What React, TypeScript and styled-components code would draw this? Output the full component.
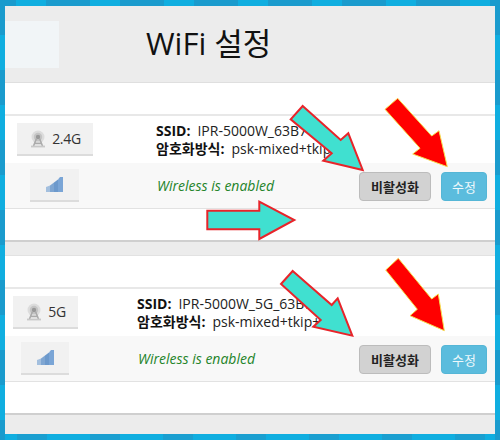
import styled, { createGlobalStyle } from 'styled-components';

const GlobalStyle = createGlobalStyle`
  html, body {
    margin: 0;
    padding: 0;
  }

  body {
    width: 500px;
    height: 440px;
    overflow: hidden;
    font-family: "Open Sans", "Noto Sans CJK KR", sans-serif;
  }
`;

const Page = styled.div`
  position: relative;
  box-sizing: border-box;
  width: 500px;
  height: 440px;
  padding: 6px 5px;
  background-color: #10aee0;
  background-image:
    repeating-linear-gradient(90deg, #1a9bcd -28px 16px, transparent 16px 46px),
    repeating-linear-gradient(180deg, #1a9bcd 0 35px, transparent 35px 70px),
    repeating-linear-gradient(90deg, transparent 47px 90px, #1a9fd0 90px 120px),
    repeating-linear-gradient(180deg, #1a9bcd 0 35px, transparent 35px 70px);
  background-position: 0 0, 0 0, 0 100%, 100% 0;
  background-size: 100% 6px, 5px 100%, 100% 6px, 5px 100%;
  background-repeat: no-repeat;
`;

const Frame = styled.div`
  display: flex;
  flex-direction: column;
  height: 428px;
  background: #fff;
  color: #222;
`;

const Header = styled.header`
  display: flex;
  align-items: center;
  height: 76px;
  flex-shrink: 0;
  background: #ececec;
  border-bottom: 1px solid #dfdfdf;
`;

const Logo = styled.div`
  width: 54px;
  height: 47px;
  background: #f1f5f7;
`;

const Title = styled.h1`
  margin: -2px 0 0 87px;
  font-size: 31px;
  font-weight: 400;
  line-height: 40px;
  color: #111;
`;

const Gap = styled.div`
  height: 31px;
  flex-shrink: 0;
`;

const Table = styled.div`
  border-top: 2px solid #e8e8e8;
  border-bottom: 1px solid #e2e2e2;
`;

const TopRow = styled.div<{ $pad: number; $gap: number }>`
  display: flex;
  align-items: center;
  height: 47px;
  padding-left: ${p => p.$pad}px;
  gap: ${p => p.$gap}px;
`;

const BandRow = styled.div<{ $pad: number; $gap: number }>`
  display: flex;
  align-items: center;
  height: 45px;
  padding: 0 8px 0 ${p => p.$pad}px;
  gap: ${p => p.$gap}px;
  background: #f8f8f8;
`;

const IconButton = styled.div<{ $width: number }>`
  display: flex;
  align-items: center;
  justify-content: center;
  gap: 5px;
  box-sizing: border-box;
  width: ${p => p.$width}px;
  height: 33px;
  background: #f1f1f1;
  border-bottom: 2px solid #dcdcdc;
  font-size: 14px;
  letter-spacing: -0.3px;
  color: #333;
`;

const Info = styled.div`
  font-size: 14px;
  line-height: 18px;
  color: #222;
  white-space: nowrap;
`;

const InfoLabel = styled.b`
  font-weight: 700;
  margin-right: 7px;
  color: #111;
`;

const Status = styled.em`
  flex: 1;
  font-size: 14px;
  font-style: italic;
  color: #24842a;
  white-space: nowrap;
`;

const Actions = styled.div`
  display: flex;
  gap: 10px;
  margin-top: 1px;
`;

const ActionButton = styled.button<{ $primary?: boolean }>`
  box-sizing: border-box;
  width: ${p => (p.$primary ? 46 : 72)}px;
  height: 29px;
  padding: 0;
  border-radius: 4px;
  border: 1px solid ${p => (p.$primary ? '#55b6d6' : '#bcbcbc')};
  background: ${p => (p.$primary ? '#5bbcdd' : '#d2d2d2')};
  color: ${p => (p.$primary ? '#eef8fb' : '#222')};
  font-family: "Noto Sans CJK KR", sans-serif;
  font-size: 13px;
  font-weight: ${p => (p.$primary ? 400 : 700)};
`;

const Divider = styled.div`
  height: 13px;
  flex-shrink: 0;
  background: #ececec;
  border-top: 2px solid #cfcfcf;
  border-bottom: 1px solid #e2e2e2;
`;

const Footer = styled.div`
  flex: 1;
  background: #ececec;
  border-top: 2px solid #cfcfcf;
`;

const ArrowLayer = styled.svg`
  position: absolute;
  top: 0;
  left: 0;
  pointer-events: none;
`;

const AntennaIcon = () => (
  <svg width="18" height="18" viewBox="0 0 18 18" fill="none">
    <circle cx="9" cy="7" r="6.5" fill="#dcdcdc" />
    <circle cx="9" cy="7" r="4.2" fill="#c4c4c4" />
    <circle cx="9" cy="7" r="2.2" fill="#989898" />
    <path d="M7.5 8.5 4.5 16M10.5 8.5l3 7.5M6 13.5h6" stroke="#ababab" strokeWidth="1.6" />
    <path d="M2 16.5h14" stroke="#c8c8c8" strokeWidth="1.8" />
  </svg>
);

const SignalIcon = () => (
  <svg width="17" height="15" viewBox="0 0 17 15">
    <path d="M0 15V10L4 8.5V15Z" fill="#a3bfde" />
    <path d="M4 15V8.5L8 5.5V15Z" fill="#7fa6d2" />
    <path d="M8 15V5.5L12 2.5V15Z" fill="#6c99cc" />
    <path d="M12 15V2.5L14 0H17V15Z" fill="#7aa5d6" />
  </svg>
);

const arrows = [
  { fill: '#40e0d0', stroke: '#e8242a', width: 2, points: '302.7,106 340.7,140 348.3,133.3 362.7,170 323.3,160.7 331.7,153.3 290.7,119.3' },
  { fill: '#ff0000', stroke: '#f5e050', width: 1, points: '397.7,98.3 431.7,136 439,130.7 447.3,166.7 412.7,154 420,148.3 385,109.3' },
  { fill: '#40e0d0', stroke: '#e8242a', width: 2, points: '207.3,210.7 259.3,210.7 259.3,201.7 294.3,220 259.3,239 259.3,229.3 207.3,229.3' },
  { fill: '#40e0d0', stroke: '#e8242a', width: 2, points: '292.7,271 331.7,305 337.7,298.3 352.3,335.7 313.3,326.7 320.7,320 281,284' },
  { fill: '#ff0000', stroke: '#f5e050', width: 1, points: '398.3,258.3 431.7,299 438.3,294 444.3,330.7 410,315.7 417.3,309.3 385.7,270' },
];

const networks = [
  { band: '2.4G', ssid: 'IPR-5000W_63B7', top: { pad: 12, gap: 63 }, bottom: { pad: 25, gap: 78 }, labelWidth: 76, signalWidth: 49 },
  { band: '5G', ssid: 'IPR-5000W_5G_63B7', top: { pad: 8, gap: 59 }, bottom: { pad: 16, gap: 69 }, labelWidth: 65, signalWidth: 48 },
];

const App = () => {
  return (
    <Page>
      <GlobalStyle />
      <Frame>
        <Header>
          <Logo />
          <Title>WiFi 설정</Title>
        </Header>
        {networks.map((net, i) => (
          <div key={net.band}>
            {i > 0 && <Divider />}
            <Gap />
            <Table>
              <TopRow $pad={net.top.pad} $gap={net.top.gap}>
                <IconButton $width={net.labelWidth}>
                  <AntennaIcon />
                  {net.band}
                </IconButton>
                <Info>
                  <div>
                    <InfoLabel>SSID:</InfoLabel>
                    {net.ssid}
                  </div>
                  <div>
                    <InfoLabel>암호화방식:</InfoLabel>
                    psk-mixed+tkip+
                  </div>
                </Info>
              </TopRow>
              <BandRow $pad={net.bottom.pad} $gap={net.bottom.gap}>
                <IconButton $width={net.signalWidth}>
                  <SignalIcon />
                </IconButton>
                <Status>Wireless is enabled</Status>
                <Actions>
                  <ActionButton>비활성화</ActionButton>
                  <ActionButton $primary>수정</ActionButton>
                </Actions>
              </BandRow>
            </Table>
            <Gap />
          </div>
        ))}
        <Footer />
      </Frame>
      <ArrowLayer width="500" height="440" viewBox="0 0 500 440">
        {arrows.map(a => (
          <polygon key={a.points} points={a.points} fill={a.fill} stroke={a.stroke} strokeWidth={a.width} />
        ))}
      </ArrowLayer>
    </Page>
  );
};

export default App;
